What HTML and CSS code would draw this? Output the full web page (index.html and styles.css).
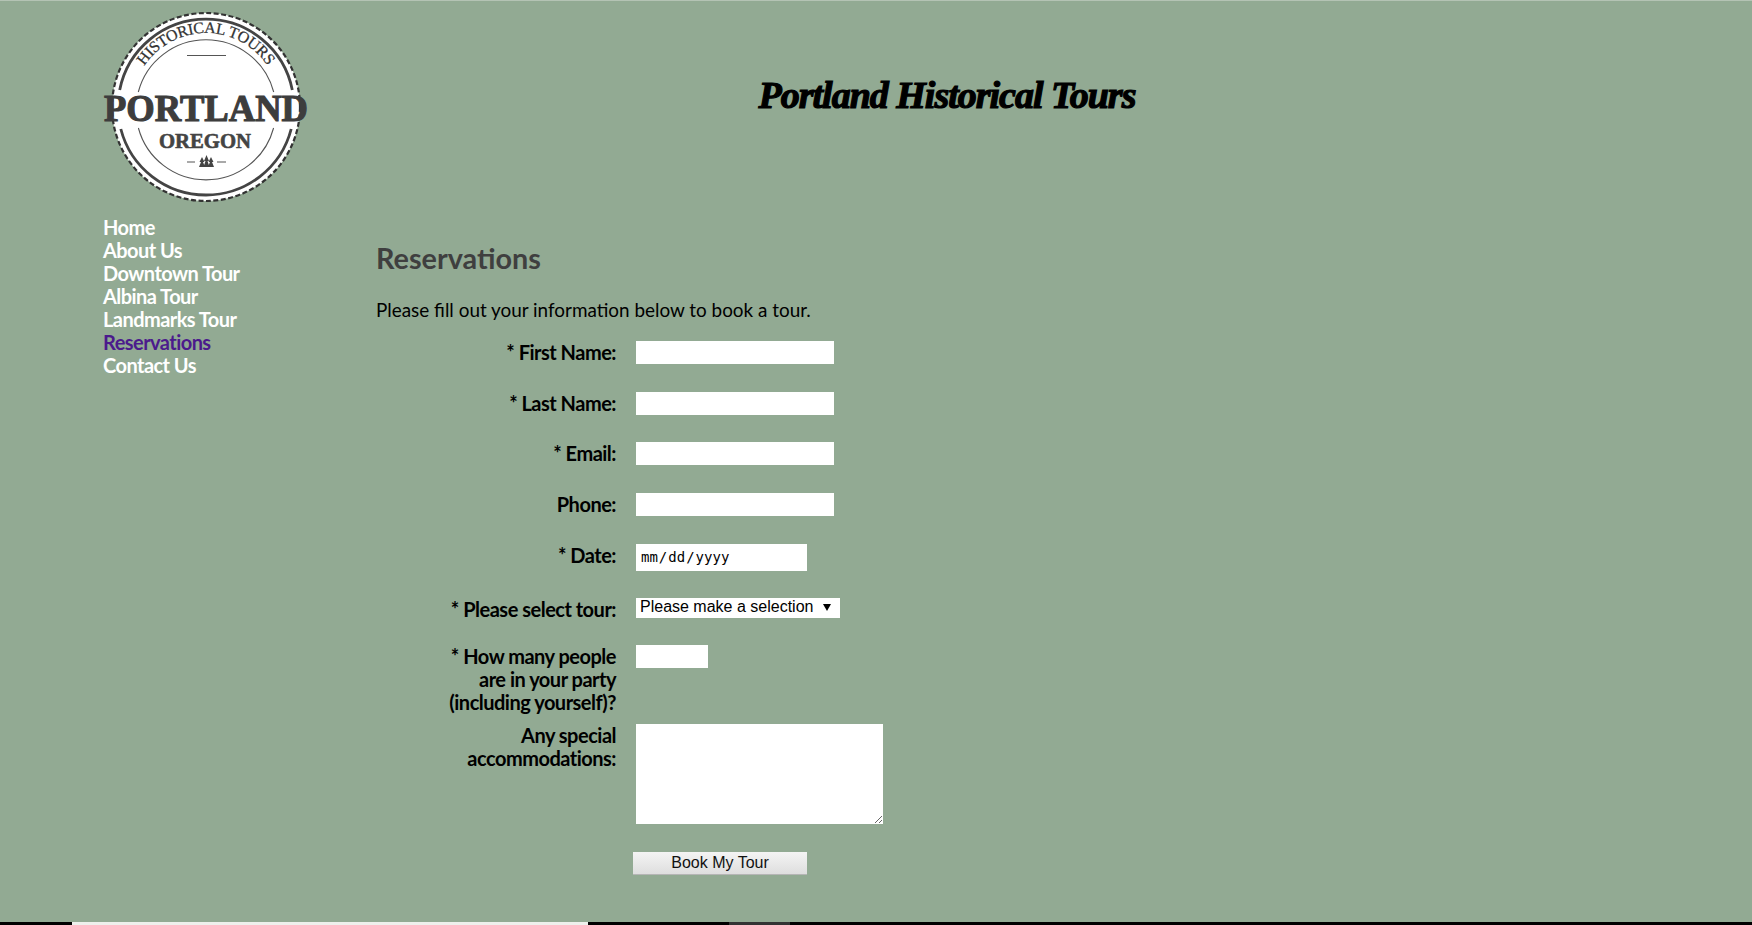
FILE: index.html
```html
<!DOCTYPE html>
<html lang="en">
<head>
    <meta charset="UTF-8">
    <title>Portland Historical Tours - Reservations</title>
    <link rel="stylesheet" href="styles.css">
</head>
<body>

<div class="page">
    <div class="sidebar">
        <svg class="logo" viewBox="-3 0 212 196" width="212" height="196" role="img" aria-label="Portland Oregon Historical Tours">
            <circle cx="103" cy="97" r="94" fill="#fff" stroke="#333" stroke-width="2.2" stroke-dasharray="5 2.5"/>
            <path d="M16.7 80A88 88 0 0 1 189.3 80" fill="none" stroke="#444" stroke-width="2.8"/>
            <path d="M17.8 119A88 88 0 0 0 188.2 119" fill="none" stroke="#444" stroke-width="2.8"/>
            <path d="M35.3 82A70 70 0 0 1 170.7 82" fill="none" stroke="#555" stroke-width="1.1"/>
            <path d="M35.4 118A70 70 0 0 0 170.6 118" fill="none" stroke="#555" stroke-width="1.1"/>
            <path id="logo-arc" d="M41.4 56A74 74 0 0 1 164.6 56" fill="none"/>
            <text class="logo-arc-text"><textPath href="#logo-arc" textLength="145">HISTORICAL TOURS</textPath></text>
            <path d="M84 45.500H123" stroke="#555" stroke-width="1.2"/>
            <text class="logo-big" x="1" y="111" textLength="204" lengthAdjust="spacingAndGlyphs">PORTLAND</text>
            <text class="logo-small" x="56" y="138" textLength="92" lengthAdjust="spacingAndGlyphs">OREGON</text>
            <path d="M84 152H92M114 152H123" stroke="#555" stroke-width="1.2"/>
            <path d="M99 147L101.500 152L100 152L102 157H96L98 152L96.500 152ZM103.500 145L106 151L104.500 151L106.500 157H100.500L102.500 151L101 151ZM108 147L110.500 152L109 152L111 157H105L107 152L105.500 152Z" fill="#444"/>
        </svg>
        <ul class="nav">
            <li><a href="#">Home</a></li>
            <li><a href="#">About Us</a></li>
            <li><a href="#">Downtown Tour</a></li>
            <li><a href="#">Albina Tour</a></li>
            <li><a href="#">Landmarks Tour</a></li>
            <li><a href="#" class="current">Reservations</a></li>
            <li><a href="#">Contact Us</a></li>
        </ul>
    </div>

    <div class="main">
        <h1>Portland Historical Tours</h1>
        <h2>Reservations</h2>
        <p>Please fill out your information below to book a tour.</p>

        <form>
            <div class="row">
                <label for="first">* First Name:</label>
                <input type="text" id="first" class="text-field">
            </div>
            <div class="row">
                <label for="last">* Last Name:</label>
                <input type="text" id="last" class="text-field">
            </div>
            <div class="row">
                <label for="email">* Email:</label>
                <input type="text" id="email" class="text-field">
            </div>
            <div class="row">
                <label for="phone">Phone:</label>
                <input type="text" id="phone" class="text-field">
            </div>
            <div class="row row-date">
                <label for="date">* Date:</label>
                <input type="date" id="date" class="date-field">
            </div>
            <div class="row row-short">
                <label for="tour">* Please select tour:</label>
                <select id="tour" class="tour-field">
                    <option>Please make a selection</option>
                </select>
            </div>
            <div class="row row-tight">
                <label for="party">* How many people<br>are in your party<br>(including yourself)?</label>
                <input type="text" id="party" class="party-field">
            </div>
            <div class="row row-notes">
                <label for="notes">Any special<br>accommodations:</label>
                <textarea id="notes"></textarea>
            </div>
            <div class="row">
                <span class="spacer"></span>
                <button type="button">Book My Tour</button>
            </div>
        </form>
    </div>
</div>

<div class="strip">
    <span class="strip-black strip-first"></span>
    <span class="strip-white"></span>
    <span class="strip-black strip-mid"></span>
    <span class="strip-grey"></span>
    <span class="strip-black strip-last"></span>
</div>

</body>
</html>
```

FILE: styles.css
```css
* {
    box-sizing: border-box;
}
html, body {
    height: 100%;
}
body {
    margin: 0;
    display: flex;
    flex-direction: column;
    height: 925px;
    overflow: hidden;
    background: #92aa93;
    border-top: 1px solid #b4c3b4;
    font-family: Lato, sans-serif;
    color: #000;
}
.page {
    flex: 1;
    display: flex;
    padding: 9px 234px 0 103px;
}
.sidebar {
    width: 273px;
    flex-shrink: 0;
}
.logo {
    display: block;
    margin-left: -3px;
}
.logo-arc-text {
    font-family: "Liberation Serif", serif;
    font-size: 16px;
    fill: #333;
    stroke: #333;
    stroke-width: 0.25px;
}
.logo-big {
    font-family: "Liberation Serif", serif;
    font-weight: bold;
    font-size: 37px;
    fill: #3d3d3d;
    stroke: #3d3d3d;
    stroke-width: 1.1px;
}
.logo-small {
    font-family: "Liberation Serif", serif;
    font-weight: bold;
    font-size: 21px;
    fill: #444;
    stroke: #444;
    stroke-width: 0.6px;
}
.nav {
    list-style: none;
    margin: 10px 0 0;
    padding: 0;
    font-size: 20px;
    font-weight: bold;
    line-height: 23px;
    letter-spacing: -0.55px;
}
.nav a {
    color: #fff;
    text-decoration: none;
}
.nav a.current {
    color: #4b1a8c;
}
.main {
    flex: 1;
}
h1 {
    margin: 65px 0 0;
    text-align: center;
    font-family: "Liberation Serif", serif;
    font-style: italic;
    font-weight: bold;
    font-size: 38px;
    line-height: 40px;
    letter-spacing: -1px;
    -webkit-text-stroke: 1.2px #000;
}
h2 {
    margin: 126px 0 0;
    font-size: 28.8px;
    line-height: 34px;
    font-weight: bold;
    color: #3f3f3f;
}
p {
    margin: 23px 0 0;
    font-size: 18.9px;
    line-height: 23px;
}
form {
    margin-top: 20px;
}
.row {
    display: flex;
    align-items: flex-start;
    gap: 20px;
    margin-bottom: 27.7px;
}
.row-date {
    margin-bottom: 27px;
}
.row-short {
    margin-bottom: 24px;
}
.row-tight {
    margin-bottom: 10px;
}
.row-notes {
    margin-bottom: 28.5px;
}
label, .spacer {
    width: 240px;
    flex-shrink: 0;
    text-align: right;
    font-size: 20px;
    font-weight: bold;
    line-height: 23px;
    letter-spacing: -0.5px;
}
input, select, textarea {
    display: block;
    border: none;
    border-radius: 0;
    background-color: #fff;
    padding: 0 4px;
    outline: none;
}
.text-field {
    width: 198px;
    height: 23px;
}
.date-field {
    width: 171px;
    height: 27px;
    font-family: "DejaVu Sans Mono", monospace;
    font-size: 14px;
}
.date-field::-webkit-calendar-picker-indicator {
    display: none;
}
.tour-field {
    width: 204px;
    height: 20px;
    padding-bottom: 2px;
    appearance: none;
    font-family: "Liberation Sans", sans-serif;
    font-size: 16px;
    background-image: url("data:image/svg+xml,%3Csvg xmlns='http://www.w3.org/2000/svg' width='8' height='7'%3E%3Cpath d='M0 0H8L4 7Z'/%3E%3C/svg%3E");
    background-repeat: no-repeat;
    background-position: right 9px center;
}
.party-field {
    width: 72px;
    height: 23px;
}
textarea {
    width: 247px;
    height: 100px;
}
button {
    width: 174px;
    height: 23px;
    margin-left: -3px;
    padding: 0;
    border: none;
    border-bottom: 1px solid #b5b5b5;
    background: linear-gradient(#f4f4f4, #dedede);
    font-family: "Liberation Sans", sans-serif;
    font-size: 16px;
    color: #111;
}
.strip {
    display: flex;
    height: 3px;
    flex-shrink: 0;
}
.strip span {
    display: block;
}
.strip-black {
    background: #000;
}
.strip-first {
    width: 72px;
}
.strip-white {
    width: 516px;
    background: #eef0ec;
}
.strip-mid {
    width: 141px;
}
.strip-grey {
    width: 61px;
    background: #333;
}
.strip-last {
    flex: 1;
}
```
